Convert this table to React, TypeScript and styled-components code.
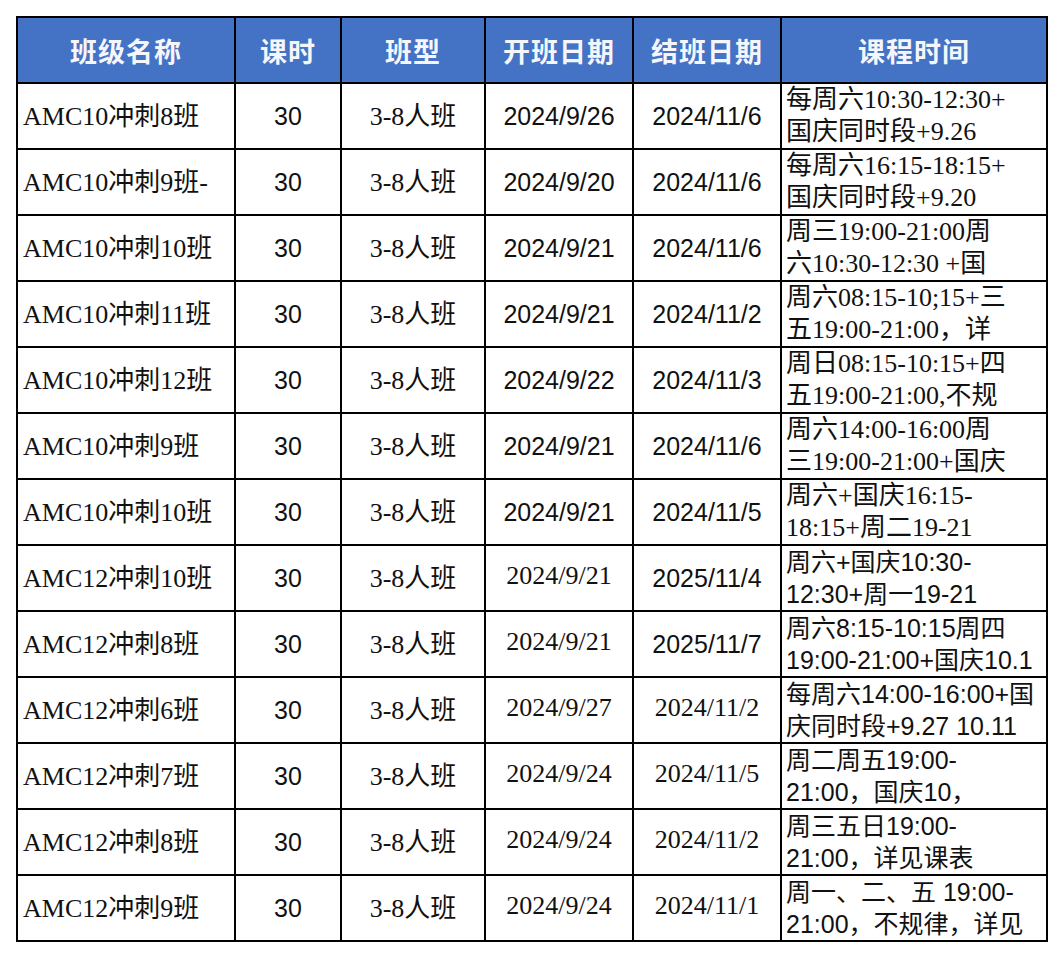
import React from 'react';
import styled, { createGlobalStyle, css } from 'styled-components';

const GlobalStyle = createGlobalStyle`
  html, body {
    margin: 0;
    padding: 0;
    background: #ffffff;
  }
`;

type Face = 'song' | 'arial';

const songStack = `"Liberation Serif", "Noto Sans CJK SC", serif`;
const arialStack = `"Liberation Sans", "Noto Sans CJK SC", sans-serif`;

const Page = styled.div`
  padding: 16px 15px 16px 16px;
  background: #ffffff;
`;

const Sheet = styled.table`
  border-collapse: collapse;
  table-layout: fixed;
  width: 1032px;
  color: #111111;
`;

const HeadCell = styled.th`
  height: 64px;
  padding: 0;
  background: #4472c4;
  border: 2px solid #000000;
  color: #f4f6fb;
  font-family: "Noto Sans CJK SC", sans-serif;
  font-size: 27px;
  font-weight: 700;
  letter-spacing: 1px;
  text-align: center;
  vertical-align: middle;
`;

/* row pitch = height + vertical padding + 2px border */
const Cell = styled.td<{ $face: Face; $align?: 'left' | 'center' }>`
  border: 2px solid #000000;
  text-align: ${(p) => p.$align ?? 'center'};
  vertical-align: middle;
  white-space: nowrap;
  overflow: hidden;
  ${(p) =>
    p.$face === 'song'
      ? css`
          height: 59px;
          padding: 0 ${p.$align === 'left' ? '4px' : '0'} 5px ${p.$align === 'left' ? '5px' : '0'};
          font-family: ${songStack};
          font-size: 26px;
        `
      : css`
          height: 64px;
          padding: 0 ${p.$align === 'left' ? '4px' : '0'} 0 ${p.$align === 'left' ? '5px' : '0'};
          font-family: ${arialStack};
          font-size: 25px;
        `}
`;

const ScheduleCell = styled(Cell)`
  height: 64px;
  vertical-align: top;
  padding: 0 2px 0 4px;
`;

const ScheduleBox = styled.div`
  height: 64px;
  overflow: hidden;
  line-height: 32px;
`;

const Line = styled.div`
  white-space: nowrap;
`;

type Row = {
  name: string;
  start: string;
  startFace: Face;
  end: string;
  endFace: Face;
  lines: [string, string];
  scheduleFace: Face;
};

const rows: Row[] = [
  { name: 'AMC10冲刺8班', start: '2024/9/26', startFace: 'arial', end: '2024/11/6', endFace: 'arial', lines: ['每周六10:30-12:30+', '国庆同时段+9.26'], scheduleFace: 'song' },
  { name: 'AMC10冲刺9班-', start: '2024/9/20', startFace: 'arial', end: '2024/11/6', endFace: 'arial', lines: ['每周六16:15-18:15+', '国庆同时段+9.20'], scheduleFace: 'song' },
  { name: 'AMC10冲刺10班', start: '2024/9/21', startFace: 'arial', end: '2024/11/6', endFace: 'arial', lines: ['周三19:00-21:00周', '六10:30-12:30 +国'], scheduleFace: 'song' },
  { name: 'AMC10冲刺11班', start: '2024/9/21', startFace: 'arial', end: '2024/11/2', endFace: 'arial', lines: ['周六08:15-10;15+三', '五19:00-21:00，详'], scheduleFace: 'song' },
  { name: 'AMC10冲刺12班', start: '2024/9/22', startFace: 'arial', end: '2024/11/3', endFace: 'arial', lines: ['周日08:15-10:15+四', '五19:00-21:00,不规'], scheduleFace: 'song' },
  { name: 'AMC10冲刺9班', start: '2024/9/21', startFace: 'arial', end: '2024/11/6', endFace: 'arial', lines: ['周六14:00-16:00周', '三19:00-21:00+国庆'], scheduleFace: 'song' },
  { name: 'AMC10冲刺10班', start: '2024/9/21', startFace: 'arial', end: '2024/11/5', endFace: 'arial', lines: ['周六+国庆16:15-', '18:15+周二19-21'], scheduleFace: 'song' },
  { name: 'AMC12冲刺10班', start: '2024/9/21', startFace: 'song', end: '2025/11/4', endFace: 'arial', lines: ['周六+国庆10:30-', '12:30+周一19-21'], scheduleFace: 'arial' },
  { name: 'AMC12冲刺8班', start: '2024/9/21', startFace: 'song', end: '2025/11/7', endFace: 'arial', lines: ['周六8:15-10:15周四', '19:00-21:00+国庆10.1'], scheduleFace: 'arial' },
  { name: 'AMC12冲刺6班', start: '2024/9/27', startFace: 'song', end: '2024/11/2', endFace: 'song', lines: ['每周六14:00-16:00+国', '庆同时段+9.27 10.11'], scheduleFace: 'arial' },
  { name: 'AMC12冲刺7班', start: '2024/9/24', startFace: 'song', end: '2024/11/5', endFace: 'song', lines: ['周二周五19:00-', '21:00，国庆10，'], scheduleFace: 'arial' },
  { name: 'AMC12冲刺8班', start: '2024/9/24', startFace: 'song', end: '2024/11/2', endFace: 'song', lines: ['周三五日19:00-', '21:00，详见课表'], scheduleFace: 'arial' },
  { name: 'AMC12冲刺9班', start: '2024/9/24', startFace: 'song', end: '2024/11/1', endFace: 'song', lines: ['周一、二、五 19:00-', '21:00，不规律，详见'], scheduleFace: 'arial' },
];

const columns = [
  { title: '班级名称', width: 218 },
  { title: '课时', width: 106 },
  { title: '班型', width: 144 },
  { title: '开班日期', width: 148 },
  { title: '结班日期', width: 148 },
  { title: '课程时间', width: 266 },
];

const App: React.FC = () => {
  return (
    <Page>
      <GlobalStyle />
      <Sheet>
        <colgroup>
          {columns.map((c) => (
            <col key={c.title} style={{ width: c.width }} />
          ))}
        </colgroup>
        <thead>
          <tr>
            {columns.map((c) => (
              <HeadCell key={c.title}>{c.title}</HeadCell>
            ))}
          </tr>
        </thead>
        <tbody>
          {rows.map((r, i) => (
            <tr key={i}>
              <Cell $face="song" $align="left">{r.name}</Cell>
              <Cell $face="arial">30</Cell>
              <Cell $face="song">3-8人班</Cell>
              <Cell $face={r.startFace}>{r.start}</Cell>
              <Cell $face={r.endFace}>{r.end}</Cell>
              <ScheduleCell $face={r.scheduleFace} $align="left">
                <ScheduleBox>
                  <Line>{r.lines[0]}</Line>
                  <Line>{r.lines[1]}</Line>
                </ScheduleBox>
              </ScheduleCell>
            </tr>
          ))}
        </tbody>
      </Sheet>
    </Page>
  );
};

export default App;
